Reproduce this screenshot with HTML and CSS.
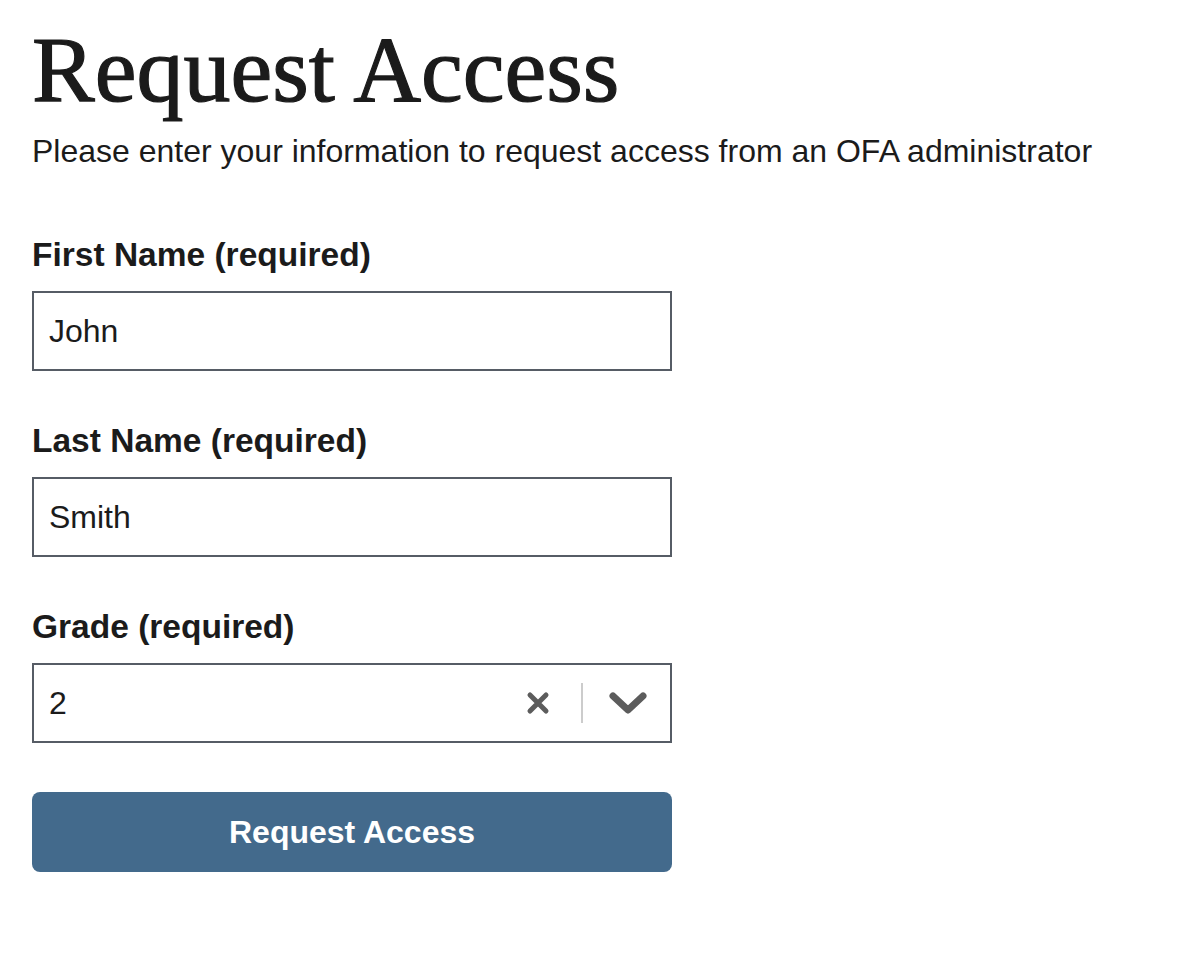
FILE: index.html
```html
<!DOCTYPE html>
<html lang="en">
<head>
<meta charset="utf-8">
<title>Request Access</title>
<link rel="stylesheet" href="styles.css">
</head>
<body>
<main class="page">
  <h1 class="title">Request Access</h1>
  <p class="intro">Please enter your information to request access from an OFA administrator</p>
  <form class="form">
    <div class="field">
      <label class="label" for="first">First Name (required)</label>
      <input class="input" id="first" type="text" value="John">
    </div>
    <div class="field">
      <label class="label" for="last">Last Name (required)</label>
      <input class="input" id="last" type="text" value="Smith">
    </div>
    <div class="field">
      <label class="label" for="grade">Grade (required)</label>
      <div class="select" id="grade">
        <span class="select-value">2</span>
        <span class="select-icons">
          <svg class="icon-clear" width="26" height="26" viewBox="0 0 26 26" aria-hidden="true">
            <path d="M5 5 L21 21 M21 5 L5 21" stroke="#5c5c5c" stroke-width="5" stroke-linecap="round" fill="none"/>
          </svg>
          <span class="divider"></span>
          <svg class="icon-chevron" width="40" height="26" viewBox="0 0 40 26" aria-hidden="true">
            <path d="M5 6 L20 20 L35 6" stroke="#5c5c5c" stroke-width="7" stroke-linecap="round" stroke-linejoin="round" fill="none"/>
          </svg>
        </span>
      </div>
    </div>
    <button class="button" type="button">Request Access</button>
  </form>
</main>
</body>
</html>
```
FILE: styles.css
```css
* { box-sizing: border-box; }
html, body { margin: 0; padding: 0; background: #fff; }
body {
  font-family: "Liberation Sans", Arial, Helvetica, sans-serif;
  color: #1b1b1b;
}
.page {
  padding: 14px 32px 40px;
  width: 671px;
}
.title {
  font-family: "Liberation Serif", "Times New Roman", serif;
  font-weight: normal;
  font-size: 94px;
  line-height: 110px;
  margin: 0;
  color: #1b1b1b;
  -webkit-text-stroke: 1.2px #1b1b1b;
}
.intro {
  font-size: 32px;
  line-height: 40px;
  margin: 7px 0 0;
  white-space: nowrap;
}
.form {
  display: flex;
  flex-direction: column;
  margin-top: 64px;
}
.field {
  display: flex;
  flex-direction: column;
  margin-bottom: 50px;
}
.field:last-of-type { margin-bottom: 49px; }
.label {
  font-weight: bold;
  font-size: 33.5px;
  line-height: 40px;
  margin-bottom: 16px;
  white-space: nowrap;
}
.input, .select {
  width: 640px;
  height: 80px;
  border: 2px solid #565c65;
  border-radius: 0;
  background: #fff;
  font-family: "Liberation Sans", Arial, Helvetica, sans-serif;
  font-size: 32px;
  color: #1b1b1b;
  padding: 0 15px;
  margin: 0;
  outline: none;
}
.select {
  display: flex;
  align-items: center;
  justify-content: space-between;
  padding-right: 22px;
}
.select-icons {
  display: flex;
  align-items: center;
}
.icon-clear { margin-right: 30px; }
.divider {
  width: 2px;
  height: 40px;
  background: #ccc;
  margin-right: 25px;
}
.button {
  width: 640px;
  height: 80px;
  border: 0;
  border-radius: 8px;
  background: #436a8c;
  color: #fff;
  font-family: "Liberation Sans", Arial, Helvetica, sans-serif;
  font-weight: bold;
  font-size: 32px;
  margin-top: 0;
  cursor: pointer;
}
```
